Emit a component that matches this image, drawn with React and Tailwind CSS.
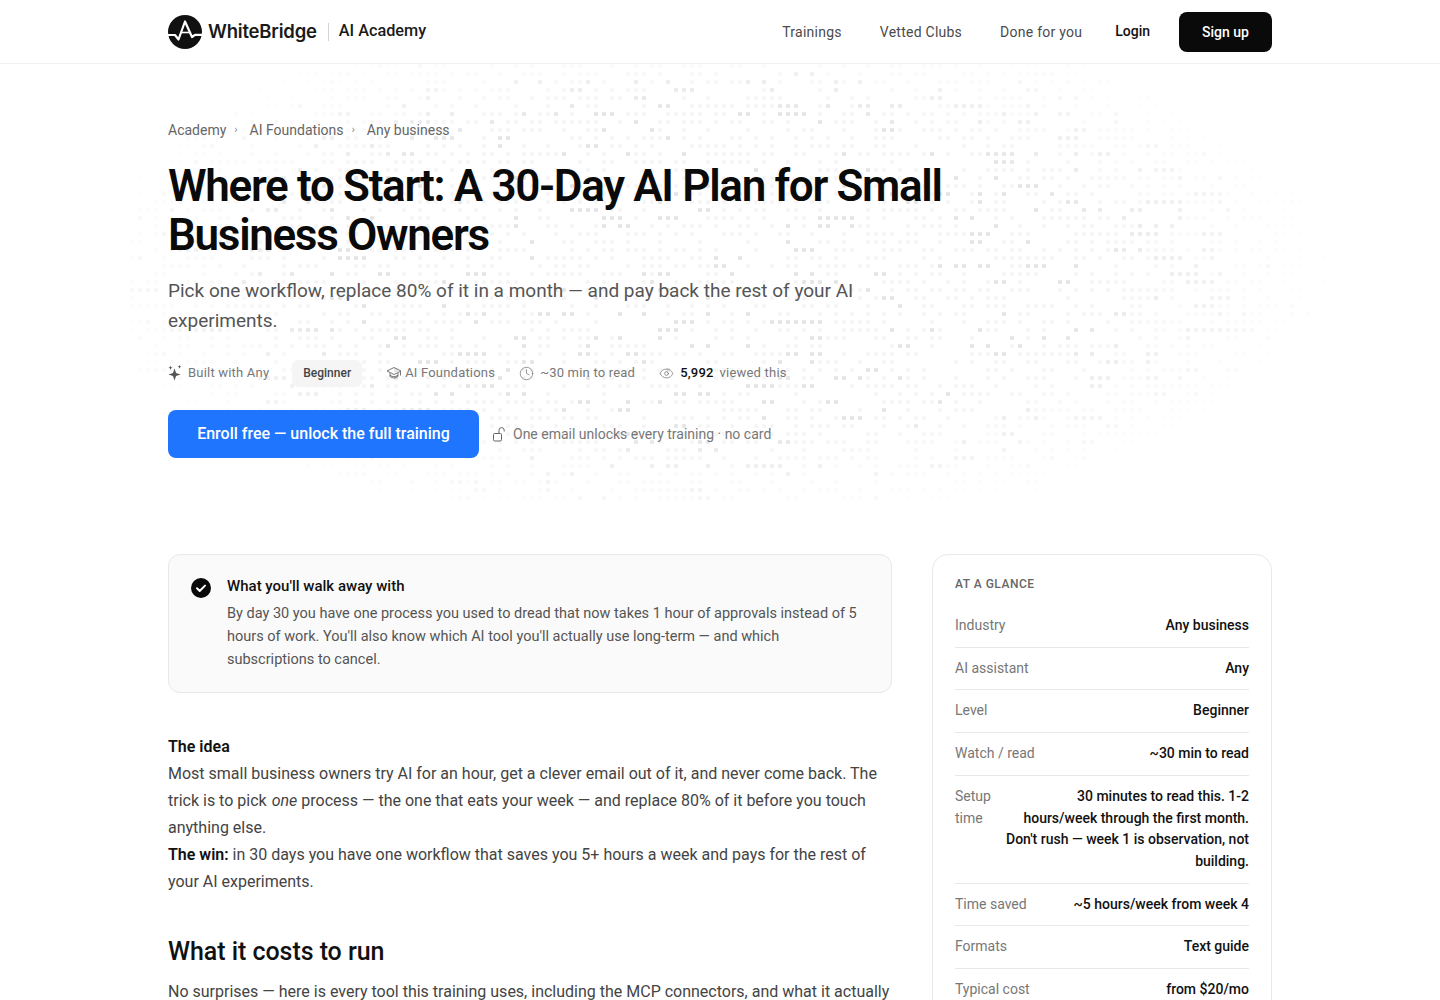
import React from "react";
import { Clock, Eye } from "lucide-react";

const rows = [
  ["Industry", "Any business"],
  ["AI assistant", "Any"],
  ["Level", "Beginner"],
  ["Watch / read", "~30 min to read"],
  ["Setup time", "30 minutes to read this. 1-2 hours/week through the first month. Don't rush — week 1 is observation, not building."],
  ["Time saved", "~5 hours/week from week 4"],
  ["Formats", "Text guide"],
  ["Typical cost", "from $20/mo"],
];

function dots() {
  const out = [];
  let s = 12345;
  const rnd = () => ((s = (s * 1664525 + 1013904223) >>> 0) / 4294967296);
  for (let y = 0; y < 440; y += 8) {
    let prev = 0;
    for (let x = 0; x < 1200; x += 8) {
      const r = rnd();
      const d = Math.hypot((x - 570) / 640, (y - 205) / 265);
      const fade = Math.max(0, 1 - d);
      if (fade <= 0) continue;
      const strong = prev === 2 ? 0.4 : 0.07;
      const kind = r < strong ? 2 : r < 0.5 ? 1 : 0;
      prev = kind;
      if (kind === 0) continue;
      const o = kind === 2 ? 0.1 : 0.04;
      const op = +(o * Math.min(1, fade * 2.6)).toFixed(3);
      out.push(<rect key={x + "-" + y} x={x} y={y} width="4" height="4" rx="1.2" fill="#000" fillOpacity={op} />);
    }
  }
  return out;
}

function Logo() {
  return (
    <svg width="34" height="34" viewBox="0 0 34 34" className="shrink-0">
      <circle cx="17" cy="17" r="17" fill="#111" />
      <path d="M0 20h7l3.5 4.5L17 6.5l7 15.5 3-2.2h7" fill="none" stroke="#fff" strokeWidth="2.2" strokeLinejoin="round" />
      <path d="M12.5 17.5h9" stroke="#fff" strokeWidth="1.6" />
    </svg>
  );
}

function Star({ cx, cy, r }) {
  const k = r * 0.26;
  return <path d={`M${cx} ${cy - r}L${cx + k} ${cy - k}L${cx + r} ${cy}L${cx + k} ${cy + k}L${cx} ${cy + r}L${cx - k} ${cy + k}L${cx - r} ${cy}L${cx - k} ${cy - k}Z`} fill="#555" />;
}

function SparkIcon() {
  return (
    <svg width="14" height="16" viewBox="0 0 14 16" className="mr-1.5 shrink-0">
      <Star cx={6.5} cy={9.5} r={6} />
      <Star cx={2.5} cy={2.8} r={2.2} />
      <Star cx={11.5} cy={1.8} r={2} />
    </svg>
  );
}

function CapIcon() {
  return (
    <svg width="16" height="14" viewBox="0 0 16 14" className="mr-[3px] shrink-0" fill="none" stroke="#666" strokeWidth="0.9" strokeLinejoin="round">
      <path d="M1 5l7-3.5L15 5 8 8.5z" />
      <path d="M4 7v3.5c1.5 1 2.8 1.5 4 1.5s2.5-.5 4-1.5V7" />
      <path d="M4 9.2c1.5 1 2.8 1.4 4 1.4s2.5-.4 4-1.4" />
      <path d="M14.5 5.5V9.5" />
    </svg>
  );
}

function OpenLock() {
  return (
    <svg width="13" height="15" viewBox="0 0 13 15" className="mr-[7px] ml-[14px] shrink-0" fill="none" stroke="#666" strokeWidth="1">
      <rect x="0.5" y="6.5" width="8" height="7.5" rx="1.2" />
      <path d="M6 6.5V3.2a2.6 2.6 0 0 1 5.2 0v1" strokeLinecap="round" />
    </svg>
  );
}

export default function App() {
  return (
    <div className="relative h-[1000px] overflow-hidden bg-white font-['Roboto',sans-serif] text-[#111]">
      <header className="h-16 border-b border-[#f0f0f0]">
        <div className="mx-auto flex h-full w-[1104px] items-center justify-between">
          <div className="flex items-center">
            <Logo />
            <span className="ml-1.5 font-['Inter',sans-serif] text-[18.5px] font-semibold tracking-[-0.2px] text-[#1a1a1a]">WhiteBridge</span>
            <span className="mr-2.5 ml-[11px] h-[18px] w-px bg-[#d4d4d4]" />
            <span className="pb-[1px] text-[16.25px] leading-none font-medium text-[#1a1a1a]">AI Academy</span>
          </div>
          <nav className="flex items-center text-sm tracking-[0.25px] text-[#4b4b4b]">
            <a className="mr-[38px]">Trainings</a>
            <a className="mr-[38px]">Vetted Clubs</a>
            <a className="mr-[33px]">Done for you</a>
            <a className="mr-[29px] pb-0.5 font-medium tracking-normal text-[#111]">Login</a>
            <a className="flex h-10 w-[93px] items-center justify-center rounded-lg bg-[#0a0a0a] font-medium tracking-normal text-white">Sign up</a>
          </nav>
        </div>
      </header>

      <section className="relative h-[490px]">
        <svg className="absolute top-0 left-[130px]" width="1200" height="440">{dots()}</svg>
        <div className="relative mx-auto w-[1104px] pt-[56px]">
          <div className="flex items-center text-sm text-[#666]">
            <span>Academy</span>
            <span className="mx-2 text-[11px] text-[#888]">›</span>
            <span className="ml-1">AI Foundations</span>
            <span className="mx-2 text-[11px] text-[#888]">›</span>
            <span className="ml-1">Any business</span>
          </div>
          <h1 className="mt-[22px] w-[800px] text-[44px] leading-[49px] font-semibold tracking-[-1.32px] text-[#0a0a0a]">
            Where to Start: A 30-Day AI Plan for Small Business Owners
          </h1>
          <p className="mt-4 w-[724px] text-[19px] leading-[30px] text-[#555]">
            Pick one workflow, replace 80% of it in a month — and pay back the rest of your AI experiments.
          </p>
          <div className="mt-[23px] flex h-7 items-center text-[13px] tracking-[0.2px] text-[#777]">
            <SparkIcon />
            <span>Built with Any</span>
            <span className="mr-[24px] ml-[23px] flex h-[27px] items-center rounded-md bg-[#f5f5f5] px-[11px] text-xs font-medium tracking-normal text-[#444]">Beginner</span>
            <CapIcon />
            <span>AI Foundations</span>
            <Clock size={15} strokeWidth={1.2} className="mr-[6px] ml-6" />
            <span>~30 min to read</span>
            <Eye size={15} strokeWidth={1.2} className="mr-[6px] ml-6" />
            <span className="mr-1.5 font-medium tracking-[0.2px] text-[#111]">5,992</span>
            <span>viewed this</span>
          </div>
          <div className="mt-[23px] flex items-center">
            <a className="flex h-12 w-[311px] items-center justify-center rounded-lg bg-[#1f75fe] text-base font-medium text-white">Enroll free — unlock the full training</a>
            <OpenLock />
            <span className="pb-px text-sm text-[#777]">One email unlocks every training · no card</span>
          </div>
        </div>
      </section>

      <main className="mx-auto flex w-[1104px] items-start justify-between">
        <div className="w-[724px]">
          <div className="flex h-[139px] rounded-xl border border-[#e8e8e8] bg-[#fafafa] pt-[21px] pl-[22px]">
            <svg width="20" height="20" viewBox="0 0 20 20" className="mt-0.5 shrink-0">
              <circle cx="10" cy="10" r="10" fill="#0a0a0a" />
              <path d="M6 10.3l2.7 2.7L14 7.6" fill="none" stroke="#fff" strokeWidth="2" strokeLinecap="round" strokeLinejoin="round" />
            </svg>
            <div className="ml-4 w-[640px]">
              <div className="text-[15px] leading-5 font-medium text-[#111]">What you'll walk away with</div>
              <p className="mt-1.5 text-[14.5px] leading-[23px] text-[#555]">
                By day 30 you have one process you used to dread that now takes 1 hour of approvals instead of 5 hours of work. You'll also know which AI tool you'll actually use long-term — and which subscriptions to cancel.
              </p>
            </div>
          </div>

          <div className="mt-[40px] text-base leading-[27px] text-[#444]">
            <div className="font-semibold text-[#111]">The idea</div>
            <p>
              Most small business owners try AI for an hour, get a clever email out of it, and never come back. The trick is to pick <em className="pl-px">one</em> process — the one that eats your week — and replace 80% of it before you touch anything else.
            </p>
            <p>
              <strong className="font-semibold text-[#111]">The win:</strong> in 30 days you have one workflow that saves you 5+ hours a week and pays for the rest of your AI experiments.
            </p>
          </div>
          <h2 className="mt-[41px] text-[25px] leading-8 font-medium tracking-[-0.05px] text-[#111]">What it costs to run</h2>
          <p className="mt-[10px] text-base leading-[27px] text-[#444]">
            No surprises — here is every tool this training uses, including the MCP connectors, and what it actually costs.
          </p>
        </div>

        <aside className="w-[340px] rounded-2xl border border-[#e8e8e8] bg-white px-[22px] pt-[21px] pb-2">
          <div className="text-xs leading-4 font-medium tracking-[0.5px] text-[#666]">AT A GLANCE</div>
          <div className="mt-[13px]">
            {rows.map(([k, v], i) => (
              <div key={k} className={"flex justify-between py-[10px] text-sm leading-[21.7px] " + (i < rows.length - 1 ? "border-b border-[#e8e8e8]" : "")}>
                <span className={"shrink-0 text-[#777] " + (k === "Setup time" ? "w-[50px]" : "whitespace-nowrap")}>{k}</span>
                <span className="max-w-[244px] text-right font-medium text-[#111]">{v}</span>
              </div>
            ))}
          </div>
        </aside>
      </main>
    </div>
  );
}
